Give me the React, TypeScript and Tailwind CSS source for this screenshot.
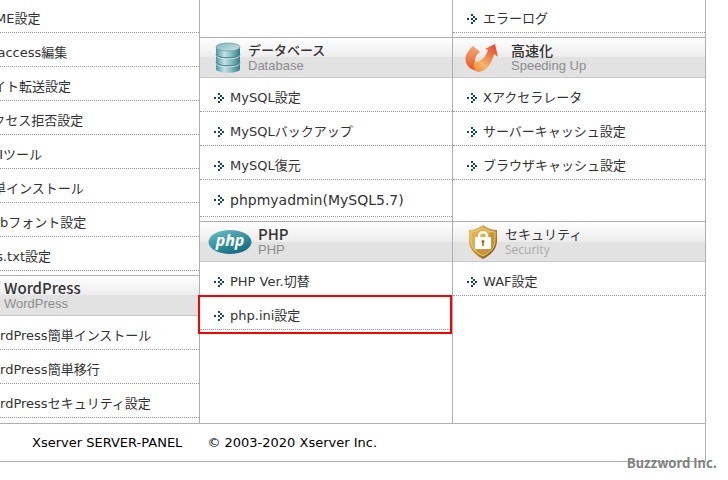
import React from 'react';

type MenuItem = {
  label: string;
  highlighted?: boolean;
  large?: boolean;
};

type HeaderProps = {
  title: string;
  subtitle: string;
  icon?: React.ReactNode;
  titleClass?: string;
  subtitleClass?: string;
};

function ArrowIcon() {
  return (
    <svg width="10" height="10" viewBox="0 0 10 10" fill="#0f4a52" shapeRendering="crispEdges" className="shrink-0" aria-hidden="true">
      <path d="M0 4h2v2h-2zM4 4h2v2h-2zM4 0h2v2h-2zM6 2h2v2h-2zM8 4h2v2h-2zM6 6h2v2h-2zM4 8h2v2h-2z" />
    </svg>
  );
}

function DatabaseIcon() {
  return (
    <svg width="26" height="32" viewBox="0 0 26 32" aria-hidden="true">
      <defs>
        <linearGradient id="dbBody" x1="0" x2="1">
          <stop offset="0" stopColor="#4f98a0" />
          <stop offset="0.35" stopColor="#c2e1e4" />
          <stop offset="0.6" stopColor="#8fc2c7" />
          <stop offset="1" stopColor="#357c88" />
        </linearGradient>
        <linearGradient id="dbTop" x1="0" x2="1" y1="0" y2="1">
          <stop offset="0" stopColor="#7fb5bb" />
          <stop offset="1" stopColor="#cfe6e8" />
        </linearGradient>
      </defs>
      <path d="M1 21v6c0 5 24 5 24 0v-6z" fill="url(#dbBody)" />
      <path d="M1 21c0 5 24 5 24 0" fill="none" stroke="#d6ecee" />
      <path d="M1 13v7c0 5 24 5 24 0v-7z" fill="url(#dbBody)" />
      <path d="M1 20c0 5 24 5 24 0" fill="none" stroke="#3f8590" />
      <path d="M1 13c0 5 24 5 24 0" fill="none" stroke="#d6ecee" />
      <path d="M1 5v7c0 5 24 5 24 0v-7z" fill="url(#dbBody)" />
      <path d="M1 12c0 5 24 5 24 0" fill="none" stroke="#3f8590" />
      <ellipse cx="13" cy="5" rx="12" ry="4" fill="url(#dbTop)" stroke="#6ba5ad" strokeWidth="0.8" />
    </svg>
  );
}

function SpeedIcon() {
  return (
    <svg width="34" height="30" viewBox="0 0 34 30" aria-hidden="true">
      <defs>
        <linearGradient id="speedLeft" x1="0.5" x2="0.5" y1="0" y2="1">
          <stop offset="0" stopColor="#f3a878" />
          <stop offset="0.5" stopColor="#ee7f4a" />
          <stop offset="1" stopColor="#e2501c" />
        </linearGradient>
        <linearGradient id="speedRight" x1="0.1" x2="0.9" y1="1" y2="0">
          <stop offset="0" stopColor="#f0893a" />
          <stop offset="0.3" stopColor="#f6b46c" />
          <stop offset="0.65" stopColor="#ef7843" />
          <stop offset="1" stopColor="#e6452c" />
        </linearGradient>
      </defs>
      <path d="M8 3L15 9C12 11 10 14 10 18L13 28C6 27 1 23 0.5 17C0 13 3 7 8 3z" fill="url(#speedLeft)" />
      <path d="M9 19C16 19 21 14 23 7L20 6L30 1L33 14L29 11C27 20 21 29 13 29C9 27 8 23 9 19z" fill="url(#speedRight)" />
    </svg>
  );
}

function PhpIcon() {
  return (
    <svg width="44" height="26" viewBox="0 0 44 26" aria-hidden="true">
      <defs>
        <linearGradient id="phpOval" x1="0.2" x2="0.8" y1="0" y2="1">
          <stop offset="0" stopColor="#69b9c0" />
          <stop offset="0.5" stopColor="#35909e" />
          <stop offset="1" stopColor="#0d6580" />
        </linearGradient>
      </defs>
      <ellipse cx="22" cy="13" rx="21.5" ry="12" fill="url(#phpOval)" />
      <text x="22" y="17" textAnchor="middle" fill="#fff" fontFamily="Open Sans, sans-serif" fontSize="16" fontWeight="700" fontStyle="italic">php</text>
    </svg>
  );
}

function ShieldIcon() {
  return (
    <svg width="30" height="36" viewBox="0 0 30 36" aria-hidden="true">
      <defs>
        <linearGradient id="shieldRim" x1="0" x2="1" y1="0" y2="1">
          <stop offset="0" stopColor="#ecc66c" />
          <stop offset="0.6" stopColor="#b98423" />
          <stop offset="1" stopColor="#5d3c0e" />
        </linearGradient>
        <linearGradient id="shieldFace" x1="0" x2="1" y1="0" y2="1">
          <stop offset="0.5" stopColor="#dfb04c" />
          <stop offset="0.5" stopColor="#c8953a" />
        </linearGradient>
      </defs>
      <path d="M15 1C11 4 6 6 1 6V16C1 25 7 31 15 35C23 31 29 25 29 16V6C24 6 19 4 15 1z" fill="url(#shieldRim)" />
      <path d="M15 4C11 6 7 8 3 8V16C3 24 8 29 15 32C22 29 27 24 27 16V8C23 8 19 6 15 4z" fill="url(#shieldFace)" stroke="#f0d48b" strokeWidth="0.8" />
      <path d="M11 14V12C11 7 19 7 19 12V14" fill="none" stroke="#fff" strokeWidth="2.5" />
      <rect x="7" y="13" width="16" height="12" rx="1" fill="#fff" />
      <path d="M15 16a1.6 1.6 0 0 1 .8 3V22h-1.6V19A1.6 1.6 0 0 1 15 16z" fill="#a87420" />
    </svg>
  );
}

function SectionHeader({
  title,
  subtitle,
  icon,
  titleClass = 'text-[13px] font-medium',
  subtitleClass = "font-['Liberation_Sans'] text-[13px] text-[#8c8c8c]",
}: HeaderProps) {
  return (
    <div className="flex h-[41px] items-center border-t border-b border-t-[#b0b0b0] border-b-[#c8c8c8] bg-[linear-gradient(#fff,#ececec_50%,#e2e2e2_50%,#e2e2e2)]">
      {icon}
      <div>
        <h2 className={`font-['Noto_Sans_CJK_JP'] leading-4 text-[#333] ${titleClass}`}>{title}</h2>
        <p className={`leading-4 ${subtitleClass}`}>{subtitle}</p>
      </div>
    </div>
  );
}

function MenuList({ items }: { items: MenuItem[] }) {
  return (
    <ul className="pb-1">
      {items.map((item) => (
        <li key={item.label} className="relative border-b border-dotted border-[#999]">
          <a
            href="#"
            className={`flex items-center gap-[6px] pl-[14px] whitespace-nowrap ${item.large ? 'h-9 pt-1 text-sm' : 'h-[33px] pt-[6px]'}`}
          >
            <ArrowIcon />
            {item.label}
          </a>
          {item.highlighted && (
            <span className="pointer-events-none absolute -top-px right-0 -bottom-[5px] -left-[2px] z-10 border-2 border-[#f00]" />
          )}
        </li>
      ))}
    </ul>
  );
}

const siteItems: MenuItem[] = [
  { label: 'MIME設定' },
  { label: '.htaccess編集' },
  { label: 'サイト転送設定' },
  { label: 'アクセス拒否設定' },
  { label: 'CGIツール' },
  { label: '簡単インストール' },
  { label: 'Webフォント設定' },
  { label: 'ads.txt設定' },
];

const wordPressItems: MenuItem[] = [
  { label: 'WordPress簡単インストール' },
  { label: 'WordPress簡単移行' },
  { label: 'WordPressセキュリティ設定' },
];

const databaseItems: MenuItem[] = [
  { label: 'MySQL設定' },
  { label: 'MySQLバックアップ' },
  { label: 'MySQL復元' },
  { label: 'phpmyadmin(MySQL5.7)', large: true },
];

const speedItems: MenuItem[] = [
  { label: 'Xアクセラレータ' },
  { label: 'サーバーキャッシュ設定' },
  { label: 'ブラウザキャッシュ設定' },
];

const phpItems: MenuItem[] = [
  { label: 'PHP Ver.切替' },
  { label: 'php.ini設定', highlighted: true },
];

export default function App() {
  return (
    <div className="min-h-screen overflow-hidden bg-white font-['DejaVu_Sans','Noto_Sans_CJK_JP',sans-serif] text-[13px] leading-5 text-[#333]">
      <div className="-mt-px mr-[22px] -ml-[53px]">
        <main className="grid grid-cols-3 grid-rows-[auto_auto_1fr] *:border-r *:border-[#b0b0b0]">
          <div className="row-span-3 pb-px pl-[3px]">
            <MenuList items={siteItems} />
            <SectionHeader
              title="WordPress"
              subtitle="WordPress"
              titleClass="text-[15px] font-medium"
              icon={<div className="w-[54px]" />}
            />
            <MenuList items={wordPressItems} />
          </div>
          <div />
          <div>
            <MenuList items={[{ label: 'エラーログ' }]} />
          </div>
          <section>
            <SectionHeader title="データベース" subtitle="Database" icon={<div className="w-12 pl-[15px]"><DatabaseIcon /></div>} />
            <MenuList items={databaseItems} />
          </section>
          <section>
            <SectionHeader
              title="高速化"
              subtitle="Speeding Up"
              titleClass="text-sm leading-4 font-medium"
              icon={<div className="w-[58px] pl-3"><SpeedIcon /></div>}
            />
            <MenuList items={speedItems} />
          </section>
          <section>
            <SectionHeader
              title="PHP"
              subtitle="PHP"
              titleClass="text-[15px] font-medium"
              icon={<div className="w-[58px] pl-2"><PhpIcon /></div>}
            />
            <MenuList items={phpItems} />
          </section>
          <section>
            <SectionHeader
              title="セキュリティ"
              subtitle="Security"
              titleClass="text-[13px]"
              subtitleClass="font-['Open_Sans'] text-xs leading-4 text-[#aaa]"
              icon={<div className="w-[52px] pl-[15px]"><ShieldIcon /></div>}
            />
            <MenuList items={[{ label: 'WAF設定' }]} />
          </section>
        </main>
        <footer className="flex h-[39px] items-center gap-[25px] border border-l-0 border-[#b0b0b0] pl-[85px] text-black">
          <span>Xserver SERVER-PANEL</span>
          <small className="text-[13px]">© 2003-2020 Xserver Inc.</small>
        </footer>
      </div>
      <p className="relative -mt-[9px] mr-[11px] text-right font-['Noto_Sans_CJK_JP'] font-bold text-[#808080]">Buzzword Inc.</p>
    </div>
  );
}
